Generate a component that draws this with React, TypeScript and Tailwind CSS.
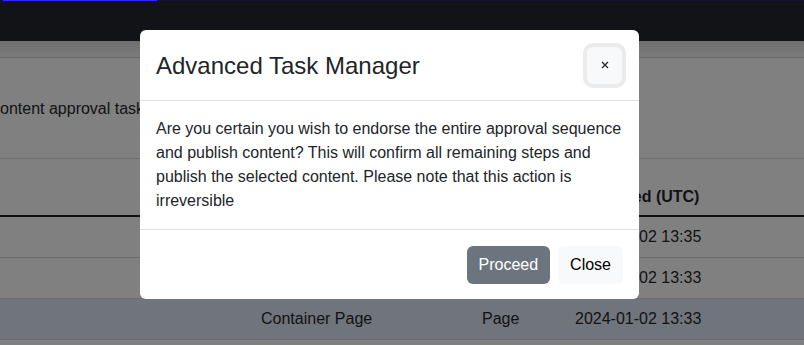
import React from 'react'

const FONT = "font-['Liberation_Sans',Arial,sans-serif]"

const ROWS = [
  { title: 'Landing Page', type: 'Page', date: '2024-01-02 13:35', active: false },
  { title: 'Container Page', type: 'Page', date: '2024-01-02 13:33', active: false },
  { title: 'Container Page', type: 'Page', date: '2024-01-02 13:33', active: true },
]

function CloseIcon() {
  return (
    <svg width="8" height="8" viewBox="0 0 8 8" fill="none" stroke="#212529" strokeWidth="1.2">
      <path d="M1 1l6 6M7 1L1 7" />
    </svg>
  )
}

export default function App() {
  return (
    <div className={`relative w-[804px] h-[345px] overflow-hidden bg-[#808080] text-[16px] text-[#111213] ${FONT}`}>
      {/* Progress line */}
      <div className="flex h-px bg-[#15123a]">
        <div className="ml-[3px] w-[154px] bg-[#2b2bff]" />
      </div>

      {/* Navbar */}
      <div className="h-[40px] bg-[#121316]" />

      {/* Breadcrumb band */}
      <div className="h-[17px] bg-gradient-to-b from-[#6f6f6f] to-[#7b7b7b] border-b border-[#6a6a6a]" />

      {/* Page intro */}
      <div className="h-[101px] border-b border-[#6e6e6e] pt-[39px]">
        <p className="-ml-[8px] leading-6 whitespace-nowrap">content approval tasks waiting for your review</p>
      </div>

      {/* Table */}
      <div className="grid grid-cols-[253px_221px_93px_1fr] font-bold h-[58px] items-end pb-[6px] border-b-2 border-[#111213]">
        <div className="px-2" />
        <div className="px-2">Title</div>
        <div className="px-2">Type</div>
        <div className="px-2 whitespace-nowrap">Published (UTC)</div>
      </div>
      {ROWS.map((row, i) => (
        <div
          key={i}
          className={`grid grid-cols-[253px_221px_93px_1fr] h-[41px] items-center border-b border-[#6c6c6c] ${
            row.active ? 'bg-[#70747c]' : ''
          }`}
        >
          <div className="px-2" />
          <div className="px-2 whitespace-nowrap">{row.title}</div>
          <div className="px-2">{row.type}</div>
          <div className="px-2 whitespace-nowrap">{row.date}</div>
        </div>
      ))}

      {/* Modal */}
      <div className="absolute left-[140px] top-[30px] w-[499px] bg-white rounded-[6px] text-[#212529]">
        <div className="flex items-center justify-between pl-4 pr-[17px] h-[71px] border-b border-[#dee2e6]">
          <h5 className="text-[24px] font-medium leading-none mt-[2px]">Advanced Task Manager</h5>
          <button
            type="button"
            aria-label="Close"
            className="grid place-items-center w-[35px] h-[37px] rounded-[6px] bg-[#f8f9fa] ring-4 ring-[#ebebeb]"
          >
            <CloseIcon />
          </button>
        </div>
        <div className="p-4 leading-6">
          Are you certain you wish to endorse the entire approval sequence and publish content? This will confirm all
          remaining steps and publish the selected content. Please note that this action is irreversible
        </div>
        <div className="flex justify-end gap-2 pt-4 pb-[15px] pr-4 border-t border-[#dee2e6]">
          <button type="button" className="h-[38px] px-3 rounded-[6px] bg-[#6c757d] text-white">
            Proceed
          </button>
          <button type="button" className="h-[38px] px-3 rounded-[6px] bg-[#f8f9fa] text-black">
            Close
          </button>
        </div>
      </div>
    </div>
  )
}
